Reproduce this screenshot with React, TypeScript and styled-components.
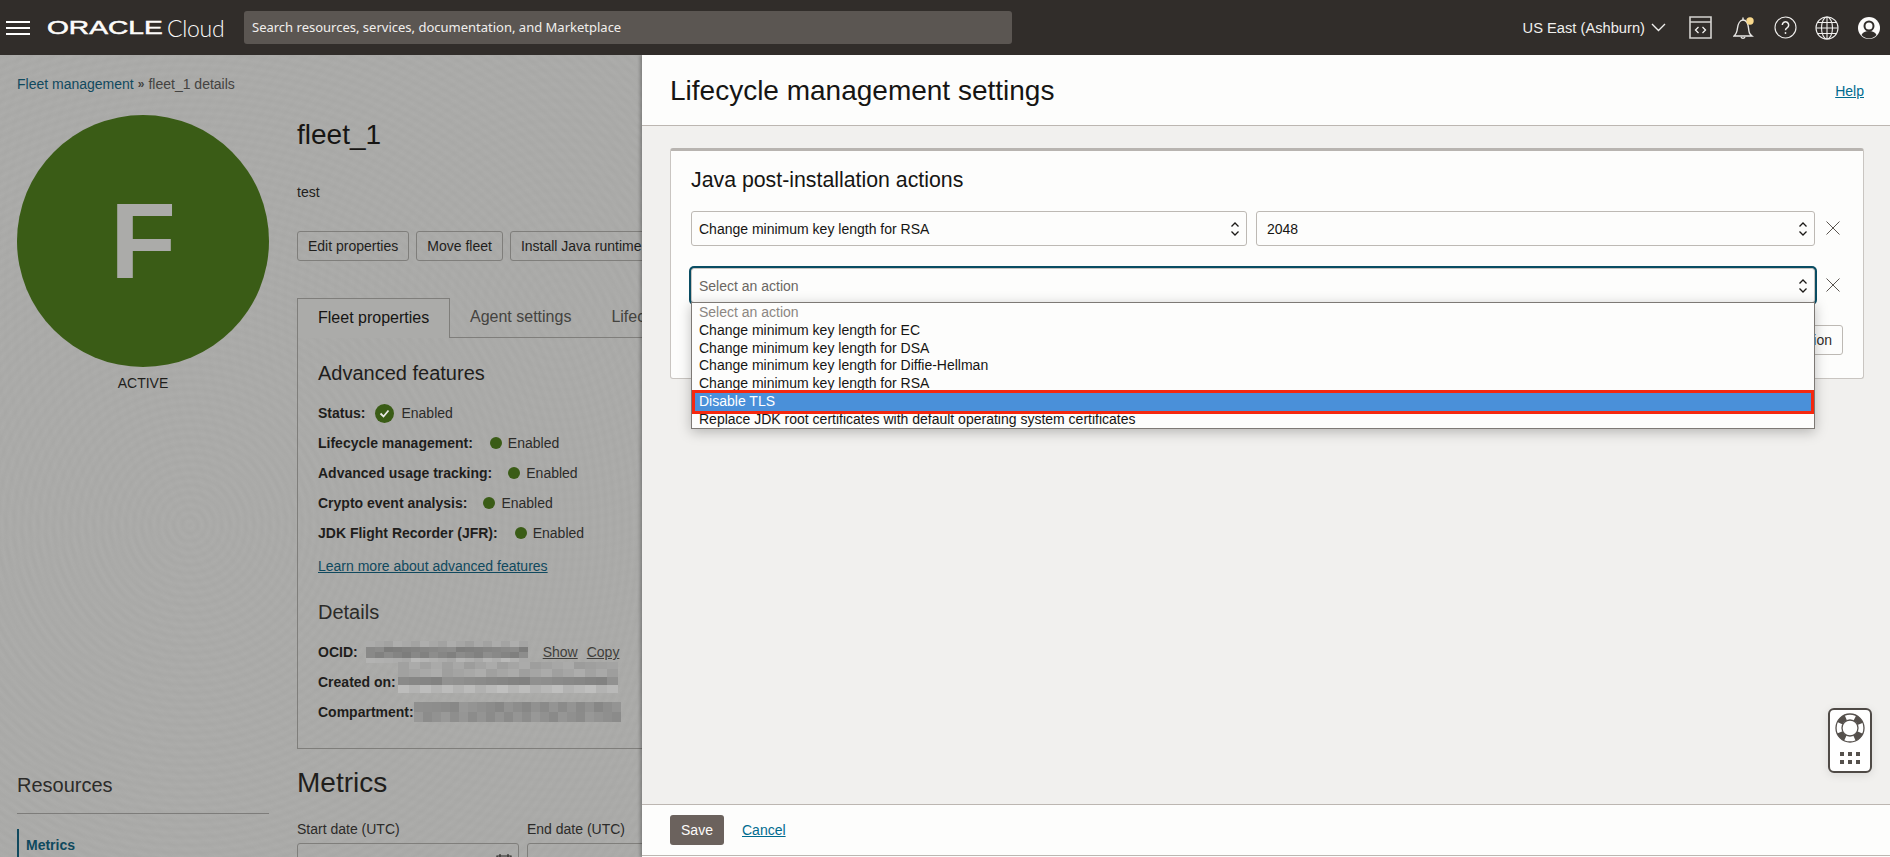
import React from "react";
import styled, { createGlobalStyle } from "styled-components";

const GlobalStyle = createGlobalStyle`
    html, body {
        margin: 0;
        padding: 0;
        height: 100%;
        overflow: hidden;
        background: #fff;
        font-family: "Liberation Sans", Arial, sans-serif;
    }
    * {
        box-sizing: border-box;
    }
`;

const features = [
    { label: "Lifecycle management:", gap: 17 },
    { label: "Advanced usage tracking:", gap: 16 },
    { label: "Crypto event analysis:", gap: 16 },
    { label: "JDK Flight Recorder (JFR):", gap: 17 },
];

const actions = [
    "Change minimum key length for EC",
    "Change minimum key length for DSA",
    "Change minimum key length for Diffie-Hellman",
    "Change minimum key length for RSA",
];

const shade = (seed: number, row: number, col: number, base: number, spread: number) => {
    const n = Math.sin(seed * 12.9 + row * 78.2 + col * 37.7) * 43758.5;
    return Math.round(base + (n - Math.floor(n)) * spread);
};

const Mosaic: React.FC<{
    seed: number;
    cols: number;
    rowBases: number[];
    width: number;
    height: number;
}> = ({ seed, cols, rowBases, width, height }) => (
    <MosaicGrid $cols={cols} $rows={rowBases.length} $width={width} $height={height}>
        {rowBases.map((base, r) =>
            Array.from({ length: cols }, (_, c) => {
                const g = shade(seed, r, c, base, 18);
                return <i key={`${r}-${c}`} style={{ background: `rgb(${g},${g},${g - 1})` }} />;
            })
        )}
    </MosaicGrid>
);

const Chevrons = () => (
    <ChevronIcon viewBox='0 0 10 16' fill='none' stroke='#1c1a18' strokeWidth='1.3'>
        <path d='M1.5 5.5 5 2l3.5 3.5M1.5 10.5 5 14l3.5-3.5' />
    </ChevronIcon>
);

const Close = () => (
    <CloseIcon viewBox='0 0 14 14' fill='none' stroke='#5a5550' strokeWidth='1'>
        <path d='M.5.5l13 13M13.5.5l-13 13' />
    </CloseIcon>
);

export default function App() {
    return (
        <Page>
            <GlobalStyle />
            <TopBar>
                <Burger viewBox='0 0 24 16' stroke='#fff' strokeWidth='2'>
                    <path d='M0 2h24M0 8h24M0 14h24' />
                </Burger>
                <Logo>
                    <Wordmark>ORACLE</Wordmark>
                    <CloudWord>Cloud</CloudWord>
                </Logo>
                <Search>Search resources, services, documentation, and Marketplace</Search>
                <TopRight>
                    <Region>
                        US East (Ashburn)
                        <svg width='15' height='9' viewBox='0 0 15 9' fill='none' stroke='#f0efed' strokeWidth='1.4'>
                            <path d='M1 1l6.5 6.5L14 1' />
                        </svg>
                    </Region>
                    <TopIcon $w={23} $mr={21}>
                        <svg width='23' height='23' viewBox='0 0 23 23' fill='none' stroke='#d4d2cf' strokeWidth='1.6'>
                            <path d='M1 1h21v21H1zM1 6h21' />
                            <path d='M9.5 11l-3 3 3 3M13.5 11l3 3-3 3' strokeWidth='1.3' stroke='#f4f3f1' />
                        </svg>
                    </TopIcon>
                    <TopIcon $w={22} $mr={19}>
                        <svg width='22' height='24' viewBox='0 0 22 24' fill='none' stroke='#e9e8e6' strokeWidth='1.4'>
                            <path d='M1 20c2.5-2 3-4 3.5-8S7 4 10 4s5 3 5.500 8 1 6 3.500 8z' />
                            <path d='M8 21a2.200 2.200 0 0 0 4 0M10 4V1.500' />
                            <circle cx='17' cy='5' r='3.700' fill='#f8d88c' stroke='none' />
                        </svg>
                    </TopIcon>
                    <TopIcon $w={23} $mr={18}>
                        <svg width='23' height='23' viewBox='0 0 23 23' fill='none' stroke='#f0efed' strokeWidth='1.1'>
                            <circle cx='11.500' cy='11.500' r='10.500' />
                            <path d='M8.300 9a3.200 3.200 0 1 1 4.800 2.800c-1 .6-1.600 1.200-1.600 2.400' strokeWidth='1.500' />
                            <circle cx='11.500' cy='17' r='.9' fill='#f0efed' stroke='none' />
                        </svg>
                    </TopIcon>
                    <TopIcon $w={24} $mr={19}>
                        <svg width='24' height='24' viewBox='0 0 24 24' fill='none' stroke='#f0efed' strokeWidth='1.1'>
                            <circle cx='12' cy='12' r='11' />
                            <ellipse cx='12' cy='12' rx='5.500' ry='11' />
                            <path d='M12 1v22M1 12h22M2.500 6.500h19M2.500 17.500h19' />
                        </svg>
                    </TopIcon>
                    <TopIcon $w={22} $mr={0}>
                        <svg width='22' height='22' viewBox='0 0 22 22'>
                            <circle cx='11' cy='11' r='11' fill='#fcfbfa' />
                            <circle cx='11' cy='9' r='4.500' fill='none' stroke='#312d2a' strokeWidth='2' />
                            <path d='M3.500 18c1.500-3 4-4 7.500-4s6 1 7.500 4a10 10 0 0 1-15 0z' fill='#312d2a' />
                        </svg>
                    </TopIcon>
                </TopRight>
            </TopBar>

            <Main>
                <Backdrop>
                    <Breadcrumb>
                        <TealText>Fleet management</TealText>
                        <Sep>»</Sep>
                        <span>fleet_1 details</span>
                    </Breadcrumb>
                    <Columns>
                        <Sidebar>
                            <Avatar>F</Avatar>
                            <AvatarState>ACTIVE</AvatarState>
                            <ResourcesTitle>Resources</ResourcesTitle>
                            <ResourceItem>Metrics</ResourceItem>
                        </Sidebar>
                        <Content>
                            <FleetTitle>fleet_1</FleetTitle>
                            <Description>test</Description>
                            <ButtonRow>
                                <GhostButton>Edit properties</GhostButton>
                                <GhostButton>Move fleet</GhostButton>
                                <GhostButton>Install Java runtime</GhostButton>
                            </ButtonRow>
                            <Tabs>
                                <ActiveTab>Fleet properties</ActiveTab>
                                <Tab>Agent settings</Tab>
                                <Tab>Lifecycle management</Tab>
                            </Tabs>
                            <TabPanel>
                                <SectionTitle>Advanced features</SectionTitle>
                                <StatusRow>
                                    <b>Status:</b>
                                    <svg width='19' height='19' viewBox='0 0 19 19'>
                                        <circle cx='9.500' cy='9.500' r='9.500' fill='#3a5c16' />
                                        <path d='M5.500 9.500l3 3 5-6' fill='none' stroke='#e8e8e4' strokeWidth='1.800' />
                                    </svg>
                                    <span>Enabled</span>
                                </StatusRow>
                                {features.map((f) => (
                                    <FeatureRow key={f.label} $gap={f.gap}>
                                        <b>{f.label}</b>
                                        <Dot />
                                        <span>Enabled</span>
                                    </FeatureRow>
                                ))}
                                <LearnMore>Learn more about advanced features</LearnMore>
                                <DetailsTitle>Details</DetailsTitle>
                                <DetailList>
                                    <DetailRow>
                                        <b>OCID:</b>
                                        <MosaicSlot $left={8} $top={0}>
                                            <Mosaic seed={1} cols={18} rowBases={[158, 124, 124, 168]} width={162} height={22} />
                                        </MosaicSlot>
                                        <PlainLink $ml={15}>Show</PlainLink>
                                        <PlainLink $ml={9}>Copy</PlainLink>
                                    </DetailRow>
                                    <DetailRow>
                                        <b>Created on:</b>
                                        <MosaicSlot $left={2} $top={-10}>
                                            <Mosaic seed={2} cols={20} rowBases={[156, 156, 128, 176]} width={220} height={31} />
                                        </MosaicSlot>
                                    </DetailRow>
                                    <DetailRow>
                                        <b>Compartment:</b>
                                        <MosaicSlot $left={0} $top={0}>
                                            <Mosaic seed={3} cols={23} rowBases={[134, 136]} width={207} height={20} />
                                        </MosaicSlot>
                                    </DetailRow>
                                </DetailList>
                            </TabPanel>
                            <MetricsTitle>Metrics</MetricsTitle>
                            <DateFields>
                                <DateField>
                                    <span>Start date (UTC)</span>
                                    <DateInput>
                                        <svg width='16' height='16' viewBox='0 0 16 16' fill='none' stroke='#2c2b29' strokeWidth='1.2'>
                                            <path d='M1 3h14v12H1zM1 6h14M4 1v3M12 1v3' />
                                        </svg>
                                    </DateInput>
                                </DateField>
                                <DateField>
                                    <span>End date (UTC)</span>
                                    <DateInput />
                                </DateField>
                            </DateFields>
                        </Content>
                    </Columns>
                </Backdrop>

                <Drawer>
                    <DrawerHeader>
                        <DrawerTitle>Lifecycle management settings</DrawerTitle>
                        <BlueLink>Help</BlueLink>
                    </DrawerHeader>
                    <DrawerBody>
                        <Card>
                            <CardTitle>Java post-installation actions</CardTitle>
                            <FieldRow>
                                <Select>
                                    Change minimum key length for RSA
                                    <Chevrons />
                                </Select>
                                <NumberSelect>
                                    2048
                                    <Chevrons />
                                </NumberSelect>
                                <Close />
                            </FieldRow>
                            <FieldRowOpen>
                                <Menu>
                                    <FocusedSelect>
                                        Select an action
                                        <Chevrons />
                                    </FocusedSelect>
                                    <Options>
                                        <PlaceholderOption>Select an action</PlaceholderOption>
                                        {actions.map((a) => (
                                            <Option key={a}>{a}</Option>
                                        ))}
                                        <SelectedOption>Disable TLS</SelectedOption>
                                        <Option>Replace JDK root certificates with default operating system certificates</Option>
                                    </Options>
                                </Menu>
                                <Close />
                            </FieldRowOpen>
                            <CardActions>
                                <AddButton>Add action</AddButton>
                            </CardActions>
                        </Card>
                        <HelpWidget>
                            <svg width='30' height='30' viewBox='0 0 30 30' fill='none'>
                                <circle cx='15' cy='15' r='14' stroke='#55504c' strokeWidth='1.300' />
                                <circle cx='15' cy='15' r='11' stroke='#55504c' strokeWidth='6' strokeDasharray='8 9.280' strokeDashoffset='-4.640' />
                                <circle cx='15' cy='15' r='8' fill='#fff' stroke='#55504c' strokeWidth='1.300' />
                            </svg>
                            <Dots>
                                {Array.from({ length: 6 }, (_, i) => (
                                    <i key={i} />
                                ))}
                            </Dots>
                        </HelpWidget>
                    </DrawerBody>
                    <DrawerFooter>
                        <SaveButton>Save</SaveButton>
                        <BlueLink>Cancel</BlueLink>
                    </DrawerFooter>
                </Drawer>
            </Main>
        </Page>
    );
}

const Page = styled.div`
    width: 1890px;
    height: 857px;
    display: flex;
    flex-direction: column;
    overflow: hidden;
`;

const TopBar = styled.header`
    height: 55px;
    flex: none;
    background: #312d2a;
    display: flex;
    align-items: center;
    padding: 0 10px 0 6px;
`;

const Burger = styled.svg`
    width: 24px;
    height: 16px;
    flex: none;
`;

const Logo = styled.div`
    display: flex;
    align-items: center;
    margin-left: 17px;
    color: #fcfbfa;
    width: 197px;
`;

const Wordmark = styled.span`
    display: inline-block;
    width: 120px;
    font-size: 19px;
    font-weight: 400;
    line-height: 20px;
    -webkit-text-stroke: 0.5px #fcfbfa;
    transform: scaleX(1.48);
    transform-origin: left center;
`;

const CloudWord = styled.span`
    font-family: Lato, sans-serif;
    font-weight: 300;
    font-size: 23px;
    letter-spacing: -0.3px;
    line-height: 24px;
`;

const Search = styled.div`
    width: 768px;
    height: 33px;
    background: #5b5652;
    border-radius: 3px;
    color: #f1efed;
    font-family: "Noto Sans", sans-serif;
    font-size: 13px;
    line-height: 33px;
    padding-left: 8px;
`;

const TopRight = styled.div`
    margin-left: auto;
    display: flex;
    align-items: center;
`;

const Region = styled.div`
    display: flex;
    align-items: center;
    gap: 6px;
    color: #f0efed;
    font-size: 14.700px;
    margin-right: 23px;
`;

const TopIcon = styled.div<{ $w: number; $mr: number }>`
    width: ${(p) => p.$w}px;
    margin-right: ${(p) => p.$mr}px;
    display: flex;
    align-items: center;
    justify-content: center;
`;

const Main = styled.div`
    position: relative;
    flex: 1;
    min-height: 0;
    overflow: hidden;
`;

const Backdrop = styled.div`
    height: 100%;
    overflow: hidden;
    padding: 20px 0 0 17px;
    color: #1f1e1c;
    font-size: 14px;
    background-color: #ababa9;
    background-image:
        repeating-radial-gradient(circle at 190px 470px, rgba(0, 0, 0, 0.018) 0, transparent 4px, rgba(0, 0, 0, 0.018) 8px),
        repeating-radial-gradient(circle at 560px 250px, rgba(255, 255, 255, 0.018) 0, transparent 5px, rgba(255, 255, 255, 0.018) 10px);
`;

const Breadcrumb = styled.div`
    height: 18px;
    line-height: 18px;
    color: #444341;
    display: flex;
`;

const TealText = styled.span`
    color: #10495e;
`;

const Sep = styled.span`
    margin: 0 4px 0 4px;
    font-size: 12px;
    font-weight: 700;
`;

const Columns = styled.div`
    display: flex;
    margin-top: 22px;
`;

const Sidebar = styled.aside`
    width: 252px;
    flex: none;
`;

const Avatar = styled.div`
    width: 252px;
    height: 252px;
    border-radius: 50%;
    background: #3a5c16;
    color: #ababa9;
    font-size: 108px;
    font-weight: 700;
    line-height: 252px;
    text-align: center;
`;

const AvatarState = styled.div`
    margin-top: 8px;
    text-align: center;
    line-height: 16px;
`;

const ResourcesTitle = styled.div`
    margin-top: 382px;
    height: 41px;
    font-size: 20px;
    line-height: 24px;
    padding-bottom: 17px;
    border-bottom: 1px solid #7d7c7a;
    color: #2c2b29;
`;

const ResourceItem = styled.div`
    margin-top: 15px;
    height: 30px;
    border-left: 2px solid #10495e;
    padding: 8px 0 0 7px;
    font-weight: 700;
    color: #10495e;
`;

const Content = styled.main`
    margin-left: 28px;
    width: 1400px;
    flex: none;
`;

const FleetTitle = styled.h1`
    margin: 2px 0 0;
    font-size: 28px;
    font-weight: 400;
    line-height: 36px;
    color: #161513;
`;

const Description = styled.div`
    margin-top: 30px;
    line-height: 18px;
`;

const ButtonRow = styled.div`
    display: flex;
    gap: 7px;
    margin-top: 30px;
`;

const GhostButton = styled.div`
    height: 30px;
    line-height: 28px;
    padding: 0 10px;
    border: 1px solid #7f7e7b;
    border-radius: 3px;
    color: #1f1e1c;
    white-space: nowrap;
`;

const Tabs = styled.div`
    display: flex;
    margin-top: 37px;
    height: 40px;
    border-bottom: 1px solid #7f7e7b;
`;

const ActiveTab = styled.div`
    width: 153px;
    height: 40px;
    padding-left: 20px;
    line-height: 37px;
    font-size: 16px;
    border: 1px solid #7f7e7b;
    border-bottom: 0;
    background: #ababa9;
    color: #161513;
`;

const Tab = styled.div`
    padding: 0 20px;
    line-height: 37px;
    font-size: 16px;
    color: #44433f;
    white-space: nowrap;
`;

const TabPanel = styled.section`
    height: 411px;
    border-left: 1px solid #7f7e7b;
    border-bottom: 1px solid #7f7e7b;
    padding: 23px 0 0 20px;
`;

const SectionTitle = styled.div`
    font-size: 20px;
    line-height: 24px;
    color: #1f1e1c;
`;

const StatusRow = styled.div`
    display: flex;
    align-items: center;
    height: 30px;
    margin-top: 13px;
    gap: 10px;
    & > span {
        color: #2c2b29;
        margin-left: -3px;
    }
`;

const FeatureRow = styled.div<{ $gap: number }>`
    display: flex;
    align-items: center;
    height: 30px;
    color: #2c2b29;
    & > b {
        color: #1f1e1c;
        margin-right: ${(p) => p.$gap}px;
    }
`;

const Dot = styled.i`
    width: 12px;
    height: 12px;
    border-radius: 50%;
    background: #3a5c16;
    margin-right: 6px;
`;

const LearnMore = styled.div`
    margin-top: 9px;
    line-height: 18px;
    color: #10495e;
    text-decoration: underline;
`;

const DetailsTitle = styled.div`
    margin-top: 25px;
    font-size: 20px;
    line-height: 24px;
    color: #2c2b29;
`;

const DetailList = styled.div`
    margin-top: 13px;
`;

const DetailRow = styled.div`
    display: flex;
    align-items: center;
    height: 30px;
`;

const MosaicSlot = styled.div<{ $left: number; $top: number }>`
    margin: ${(p) => p.$top}px 0 0 ${(p) => p.$left}px;
    height: 30px;
    display: flex;
    align-items: center;
`;

const MosaicGrid = styled.div<{ $cols: number; $rows: number; $width: number; $height: number }>`
    width: ${(p) => p.$width}px;
    height: ${(p) => p.$height}px;
    flex: none;
    display: grid;
    grid-template-columns: repeat(${(p) => p.$cols}, 1fr);
    grid-template-rows: repeat(${(p) => p.$rows}, 1fr);
`;

const PlainLink = styled.span<{ $ml: number }>`
    margin-left: ${(p) => p.$ml}px;
    color: #3f3e3b;
    text-decoration: underline;
`;

const MetricsTitle = styled.div`
    margin-top: 16px;
    font-size: 28px;
    line-height: 36px;
    color: #1f1e1c;
`;

const DateFields = styled.div`
    display: flex;
    gap: 8px;
    margin-top: 19px;
`;

const DateField = styled.div`
    width: 222px;
    color: #2c2b29;
    line-height: 18px;
`;

const DateInput = styled.div`
    height: 30px;
    margin-top: 5px;
    padding: 9px 6px 0 0;
    display: flex;
    justify-content: flex-end;
    border: 1px solid #7f7e7b;
    border-radius: 3px;
`;

const Drawer = styled.aside`
    position: absolute;
    top: 0;
    left: 642px;
    right: 0;
    bottom: 0;
    display: flex;
    flex-direction: column;
    background: #fdfdfc;
    box-shadow: -2px 0 3px rgba(0, 0, 0, 0.25);
`;

const DrawerHeader = styled.div`
    height: 71px;
    flex: none;
    display: flex;
    align-items: center;
    justify-content: space-between;
    padding: 1px 26px 0 28px;
    border-bottom: 1px solid #bcb6b1;
`;

const DrawerTitle = styled.h2`
    margin: 0;
    font-size: 28px;
    font-weight: 400;
    color: #161513;
`;

const BlueLink = styled.a`
    font-size: 14px;
    color: #006b8f;
    text-decoration: underline;
`;

const DrawerBody = styled.div`
    position: relative;
    flex: 1;
    min-height: 0;
    background: #f1f0ee;
    padding: 22px 26px 0 28px;
`;

const Card = styled.section`
    height: 231px;
    background: #fdfdfc;
    border: 1px solid #c9c5c1;
    border-top: 3px solid #b8b4b0;
    border-radius: 3px;
    padding: 16px 19px 0 20px;
`;

const CardTitle = styled.h3`
    margin: 0;
    font-size: 21.300px;
    font-weight: 400;
    line-height: 27px;
    color: #161513;
`;

const FieldRow = styled.div`
    display: flex;
    align-items: center;
    gap: 9px;
    margin-top: 17px;
    padding-right: 4px;
`;

const Select = styled.div`
    flex: 1;
    height: 35px;
    display: flex;
    align-items: center;
    justify-content: space-between;
    padding: 0 6px 0 7px;
    background: #fdfdfc;
    border: 1px solid #bdb9b4;
    border-radius: 3px;
    font-size: 14px;
    color: #161513;
`;

const NumberSelect = styled(Select)`
    padding-left: 10px;
`;

const ChevronIcon = styled.svg`
    width: 10px;
    height: 16px;
    flex: none;
`;

const CloseIcon = styled.svg`
    width: 14px;
    height: 14px;
    flex: none;
    margin: 0 0 2px 2px;
`;

const FieldRowOpen = styled.div`
    display: flex;
    align-items: center;
    gap: 9px;
    margin-top: 22px;
    padding-right: 4px;
    height: 35px;
`;

const Menu = styled.div`
    position: relative;
    flex: 1;
    z-index: 2;
`;

const FocusedSelect = styled(Select)`
    color: #6b6763;
    box-shadow: 0 0 0 2px #0a4d63;
    border-color: #c9c5c1;
    padding-top: 1px;
`;

const Options = styled.div`
    position: absolute;
    top: 34px;
    left: 0;
    right: 0;
    height: 127px;
    background: #fdfdfc;
    border: 1px solid #7d7975;
    box-shadow: 0 3px 12px rgba(0, 0, 0, 0.25);
    font-size: 14px;
    padding-top: 1px;
`;

const Option = styled.div`
    height: 17.800px;
    line-height: 17.800px;
    padding-left: 7px;
    color: #161513;
    white-space: nowrap;
`;

const PlaceholderOption = styled(Option)`
    color: #8b8682;
`;

const SelectedOption = styled(Option)`
    position: relative;
    z-index: 1;
    background: #4a90d9;
    color: #fff;
    outline: 3px solid #f5280f;
    outline-offset: -3px;
    height: 24px;
    line-height: 23px;
    margin: -3px 0;
`;

const CardActions = styled.div`
    display: flex;
    justify-content: flex-end;
    margin-top: 22px;
    padding-right: 1px;
`;

const AddButton = styled.div`
    height: 30px;
    line-height: 28px;
    padding: 0 10px;
    background: #fdfdfc;
    border: 1px solid #bdb9b4;
    border-radius: 3px;
    font-size: 14px;
    color: #312d2a;
`;

const HelpWidget = styled.div`
    position: absolute;
    top: 582px;
    right: 18px;
    width: 44px;
    height: 65px;
    padding-top: 3px;
    display: flex;
    flex-direction: column;
    align-items: center;
    gap: 9px;
    background: #fff;
    border: 2px solid #4f4a46;
    border-radius: 6px;
    box-shadow: 0 2px 10px rgba(0, 0, 0, 0.1);
`;

const Dots = styled.div`
    display: grid;
    grid-template-columns: repeat(3, 4px);
    gap: 4px;
    & > i {
        height: 4px;
        background: #55504c;
    }
`;

const DrawerFooter = styled.div`
    height: 52px;
    flex: none;
    display: flex;
    align-items: center;
    gap: 18px;
    padding-left: 28px;
    border-top: 1px solid #bcb6b1;
    border-bottom: 1px solid #bcb6b1;
    margin-bottom: 1px;
`;

const SaveButton = styled.div`
    width: 54px;
    height: 30px;
    border-radius: 3px;
    background: #6b625d;
    color: #fcfbfa;
    font-size: 14px;
    line-height: 30px;
    text-align: center;
`;
